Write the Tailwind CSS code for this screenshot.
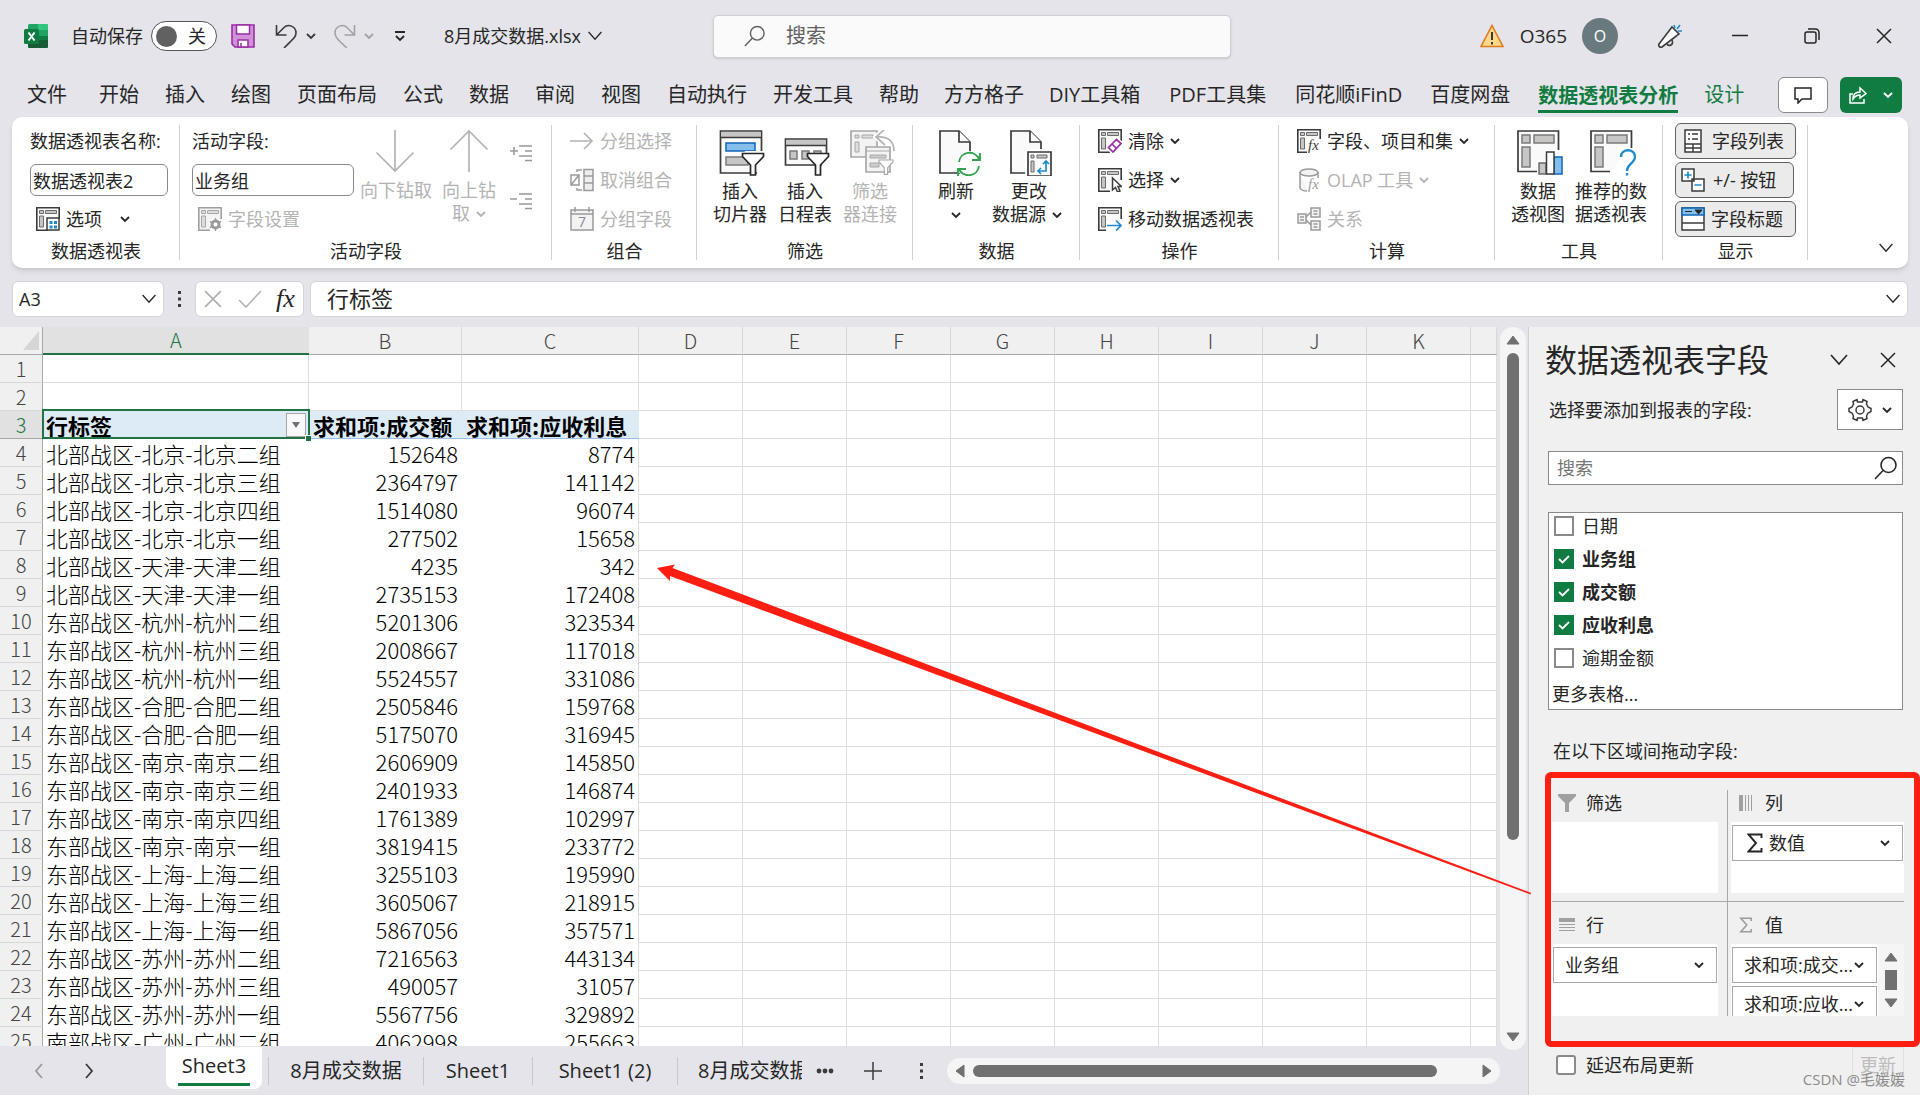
<!DOCTYPE html>
<html lang="zh-CN">
<head>
<meta charset="utf-8">
<title>8月成交数据.xlsx</title>
<script src="https://cdn.jsdelivr.net/npm/@tailwindcss/browser@4"></script>
</head>
<body class="relative flex h-screen flex-col overflow-hidden bg-[#e4e4ea] font-['Open_Sans','Noto_Sans_CJK_SC',sans-serif] text-[18px] leading-6 text-[#262626]">

<svg class="hidden" aria-hidden="true">
  <symbol id="chev" viewBox="0 0 10 8"><path d="M1 2l4 4 4-4" fill="none" stroke="currentColor" stroke-width="1.8"/></symbol>
  <symbol id="chev-lg" viewBox="0 0 20 14"><path d="M2 2l8 9 8-9" fill="none" stroke="currentColor" stroke-width="1.6"/></symbol>
  <symbol id="cross" viewBox="0 0 16 16"><path d="M1 1l14 14M15 1L1 15" fill="none" stroke="currentColor" stroke-width="1.5"/></symbol>
  <symbol id="glass" viewBox="0 0 24 24"><circle cx="14.500" cy="9" r="7.500" fill="none" stroke="currentColor" stroke-width="1.6"/><path d="M9 14.500L1 23" fill="none" stroke="currentColor" stroke-width="1.6"/></symbol>
  <symbol id="pivot" viewBox="0 0 24 24"><path d="M12 23.200H.8V.8h22.400V12" fill="#fafafa" stroke="#3b3b3b" stroke-width="1.6"/><path d="M3.500 3.500h4v3h-4zM9.500 3.500h11v3h-11zM3.500 9h4v11h-4z" fill="#c8c6c4" stroke="#6b6b6b"/></symbol>
  <symbol id="pivot-gray" viewBox="0 0 24 24"><path d="M12 23.200H.8V.8h22.400V12" fill="#f3f3f3" stroke="#a0a0a0" stroke-width="1.600"/><path d="M3.500 3.500h4v3h-4zM9.500 3.500h11v3h-11zM3.500 9h4v11h-4z" fill="#dcdcdc" stroke="#a8a8a8"/></symbol>
  <symbol id="pivot-lg" viewBox="0 0 46 46"><path d="M20 41.500H1V1h40.500V20" fill="#fafafa" stroke="#3b3b3b" stroke-width="1.7"/><path d="M5 5h8v8H5zM17 5h20v8H17zM5 17h8v20H5z" fill="#c8c6c4" stroke="#7a7a7a" stroke-width="1.5"/></symbol>
  <symbol id="funnel" viewBox="0 0 24 24"><path d="M1.500 1.500h21v3l-8 8.500v10h-5V13l-8-8.500z" fill="#fff" stroke="currentColor" stroke-width="1.700"/></symbol>
  <symbol id="sigma" viewBox="0 0 16 20"><path d="M14.500 5V1.500H1.500L9 10l-7.500 8.500h13V15" fill="none" stroke="currentColor" stroke-width="1.900"/></symbol>
  <symbol id="page" viewBox="0 0 34 46"><path d="M1 1h19l11 11v31H1z" fill="#fafafa" stroke="#3b3b3b" stroke-width="1.700"/><path d="M20 1v11h11" fill="#fff" stroke="#3b3b3b" stroke-width="1.700"/></symbol>
  <symbol id="tick" viewBox="0 0 20 20"><path d="M5 10l3.500 3.500L15 7" fill="none" stroke="#fff" stroke-width="1.800"/></symbol>
</svg>

<!-- Title bar -->
<header class="flex h-[72px] shrink-0 items-center">
  <div class="flex w-[713px] shrink-0 items-center pl-6">
    <svg class="size-6 shrink-0" viewBox="0 0 24 24"><rect x="4" width="20" height="24" rx="1.500" fill="#21a366"/><path d="M14 0h8.500A1.500 1.500 0 0 1 24 1.500V6H14z" fill="#33c481"/><path d="M4 6h10v6H4z" fill="#107c41"/><path d="M4 12h20v6H4z" fill="#107c41"/><path d="M4 16h20v6.500a1.500 1.500 0 0 1-1.500 1.500h-17A1.500 1.500 0 0 1 4 22.500z" fill="#185c37"/><rect y="5" width="15" height="15" rx="1.500" fill="#107c41"/><path d="M4.500 8.500l6 8M10.500 8.500l-6 8" stroke="#fff" stroke-width="2"/></svg>
    <span class="ml-[23px]">自动保存</span>
    <button class="ml-2 flex h-[30px] w-[66px] items-center justify-between rounded-full border border-[#555] bg-white pr-2.5 pl-1" role="switch" aria-checked="false" aria-label="自动保存"><span class="size-[21px] rounded-full bg-[#616161]"></span><span>关</span></button>
    <button class="ml-3.5" aria-label="保存"><svg class="size-6" viewBox="0 0 24 24"><path d="M1 1h22v22H4l-3-3z" fill="#d191d8" stroke="#9a2da6" stroke-width="1.600"/><path d="M5.500 1h13v9h-13zM7 16h10v7H7z" fill="#fff" stroke="#9a2da6" stroke-width="1.500"/><path d="M10 19v4" stroke="#9a2da6" stroke-width="1.500"/></svg></button>
    <button class="ml-5 flex items-center gap-[7px] text-[#3b3b3b]" aria-label="撤消"><svg class="size-6" viewBox="0 0 24 24"><path d="M1.500 1v10h10M1.500 11L9 3.500C13-.5 21 2 21 9c0 4-3 6-12 15" fill="none" stroke="currentColor" stroke-width="1.600"/></svg><svg class="h-2 w-2.5"><use href="#chev"/></svg></button>
    <button class="ml-4 flex items-center gap-2 text-[#a3a3a3]" aria-label="恢复"><svg class="size-6" viewBox="0 0 24 24"><path d="M22.500 1v10h-10M22.500 11L15 3.500C11-.5 3 2 3 9c0 4 3 7 12 15" fill="none" stroke="currentColor" stroke-width="1.600"/></svg><svg class="h-2 w-2.5"><use href="#chev"/></svg></button>
    <button class="ml-5" aria-label="自定义快速访问工具栏"><svg class="h-3 w-3" viewBox="0 0 12 12"><path d="M1 2h10M2 6l4 4 4-4" fill="none" stroke="#262626" stroke-width="1.800"/></svg></button>
    <button class="ml-[38px] flex items-center gap-1.5 whitespace-nowrap">8月成交数据.xlsx<svg class="h-3 w-4"><use href="#chev-lg"/></svg></button>
  </div>
  <label class="flex h-[43px] flex-1 items-center rounded-[5px] border border-[#d0d0d4] bg-[#fafafa] pl-[30px] text-[#616161] shadow-sm">
    <svg class="mr-5 size-6"><use href="#glass"/></svg>
    <input class="w-full bg-transparent text-[20px] outline-none placeholder:text-[#616161]" type="text" placeholder="搜索" aria-label="搜索">
  </label>
  <div class="flex w-[689px] shrink-0 items-center justify-end pr-7">
    <svg class="size-6" viewBox="0 0 24 24"><path d="M12 1.500L23 22.500H1z" fill="#fbd989" stroke="#e07a1f" stroke-width="1.600"/><path d="M12 8v8M12 18v2.500" stroke="#3b3b3b" stroke-width="2"/></svg>
    <span class="ml-4 text-[19px]">O365</span>
    <span class="ml-[15px] grid size-9 place-items-center rounded-full bg-[#69797e] text-[16px] text-white">O</span>
    <button class="ml-10" aria-label="即将推出"><svg class="size-6" viewBox="0 0 24 24"><path d="M1 20L14 3l7 7L4 23c-2 1-4-1-3-3z" fill="#fafafa" stroke="#3b3b3b" stroke-width="1.600"/><path d="M9 20c2 3 7 1 5-4" fill="none" stroke="#3b3b3b" stroke-width="1.600"/><path d="M16 1l1 3M22 1l-3 4M20 7h4" stroke="#1e8bcd" stroke-width="1.600"/></svg></button>
    <button class="ml-[50px]" aria-label="最小化"><svg class="h-4 w-4" viewBox="0 0 16 16"><path d="M0 7.500h16" stroke="#262626" stroke-width="1.500"/></svg></button>
    <button class="ml-[56px]" aria-label="还原"><svg class="h-4 w-4" viewBox="0 0 16 16" fill="none" stroke="#262626" stroke-width="1.500"><rect x="1" y="4" width="11" height="11" rx="2"/><path d="M4 1h7.500A3.500 3.500 0 0 1 15 4.500V12"/></svg></button>
    <button class="ml-[56px]" aria-label="关闭"><svg class="h-4 w-4"><use href="#cross"/></svg></button>
  </div>
</header>

<!-- Ribbon tabs -->
<nav class="flex h-[45px] shrink-0 items-center whitespace-nowrap pr-[18px] pl-3.5 text-[20px]">
  <a class="mr-1.5 px-[13px]" href="#">文件</a>
  <a class="px-[13px]" href="#">开始</a>
  <a class="px-[13px]" href="#">插入</a>
  <a class="px-[13px]" href="#">绘图</a>
  <a class="px-[13px]" href="#">页面布局</a>
  <a class="px-[13px]" href="#">公式</a>
  <a class="px-[13px]" href="#">数据</a>
  <a class="px-[13px]" href="#">审阅</a>
  <a class="px-[13px]" href="#">视图</a>
  <a class="px-[13px]" href="#">自动执行</a>
  <a class="px-[13px]" href="#">开发工具</a>
  <a class="px-[13px]" href="#">帮助</a>
  <a class="px-3" href="#">方方格子</a>
  <a class="px-[13px]" href="#">DIY工具箱</a>
  <a class="px-4" href="#">PDF工具集</a>
  <a class="px-[13px]" href="#">同花顺iFinD</a>
  <a class="px-[15px]" href="#">百度网盘</a>
  <a class="mx-[13px] mt-2 border-b-[3px] border-[#107c41] pb-0.5 font-bold text-[#107c41]" href="#">数据透视表分析</a>
  <a class="px-[13px] text-[#107c41]" href="#">设计</a>
  <button class="ml-auto grid h-9 w-[50px] place-items-center rounded-md border border-[#8a8a8a] bg-white" aria-label="批注"><svg class="size-[18px]" viewBox="0 0 18 18"><path d="M1 2h16v11H8l-4 4v-4H1z" fill="none" stroke="#262626" stroke-width="1.500"/></svg></button>
  <button class="ml-3 flex h-9 w-[62px] items-center justify-center gap-4 rounded-md bg-[#107c41] text-white" aria-label="共享"><svg class="size-[18px]" viewBox="0 0 18 18" fill="none" stroke="currentColor" stroke-width="1.500"><path d="M4 8H1v9h14v-4"/><path d="M4 13c0-5 3-7 7-7V2l6 5.500L11 12V9c-3 0-5 1-7 4z"/></svg><svg class="h-2 w-2.5"><use href="#chev"/></svg></button>
</nav>

<!-- Ribbon -->
<section class="mx-3 flex h-[151px] shrink-0 rounded-[10px] bg-white pt-1 whitespace-nowrap shadow-md">
  <div class="flex w-[168px] flex-col">
    <div class="h-[117px] pl-[18px]">
      <label class="flex h-[39px] items-center" for="pt-name">数据透视表名称:</label>
      <div class="flex h-[39px] items-center"><input class="h-8 w-[138px] rounded-md border border-[#8a8a8a] bg-white px-0.5" id="pt-name" value="数据透视表2"></div>
      <button class="flex h-[39px] items-center gap-1.5 pl-1.5"><svg class="size-6" viewBox="0 0 24 24"><use href="#pivot"/><path d="M11 11h12v12H11z" fill="#fff" stroke="#3b3b3b" stroke-width="1.500"/><path d="M13.500 14h3v3h-3zM18 14h3v3h-3zM13.500 18.500h3v3h-3zM18 18.500h3v3h-3z" fill="#1e8bcd"/></svg>选项<svg class="ml-3 h-2 w-2.5"><use href="#chev"/></svg></button>
    </div>
    <div class="text-center leading-[26px]">数据透视表</div>
  </div>
  <div class="mt-1 mb-2 -ml-px w-px bg-[#d1d1d1]"></div>

  <div class="flex w-[372px] flex-col">
    <div class="flex h-[117px] pl-3">
      <div class="w-[162px]">
        <label class="flex h-[39px] items-center" for="act-field">活动字段:</label>
        <div class="flex h-[39px] items-center"><input class="h-8 w-full rounded-md border border-[#8a8a8a] bg-white px-0.5" id="act-field" value="业务组"></div>
        <button class="flex h-[39px] items-center gap-1.5 pl-1.5 text-[#b4b4b4]" disabled><svg class="size-6" viewBox="0 0 24 24"><use href="#pivot-gray"/><circle cx="17.500" cy="17.500" r="6.500" fill="#fff"/><circle cx="17.500" cy="17.500" r="3.500" fill="none" stroke="#9a9a9a" stroke-width="3"/><path d="M17.500 11v13M12 14.500l11 6M23 14.500l-11 6" stroke="#9a9a9a" stroke-width="1.500"/><circle cx="17.500" cy="17.500" r="2" fill="#fff"/></svg>字段设置</button>
      </div>
      <button class="ml-1.5 flex w-[72px] flex-col items-center pt-2 leading-[23px] text-[#b4b4b4]" disabled><svg class="mb-1 h-[46px] w-[46px]" viewBox="0 0 46 46"><path d="M22 1v41M3.500 23.500L22 42l18.500-18.500" fill="none" stroke="currentColor" stroke-width="1.700"/></svg>向下钻取</button>
      <button class="ml-2.5 flex w-[54px] flex-col items-center pt-2 leading-[23px] text-[#b4b4b4]" disabled><svg class="mb-1 h-[46px] w-[46px]" viewBox="0 0 46 46"><path d="M23 43V2M4.500 20.500L23 2l18.500 18.500" fill="none" stroke="currentColor" stroke-width="1.700"/></svg>向上钻<span class="flex items-center gap-1.5">取<svg class="h-2 w-2.5"><use href="#chev"/></svg></span></button>
      <div class="ml-3.5 flex flex-col gap-[30px] pt-[23px] text-[#9a9a9a]">
        <button disabled aria-label="展开字段"><svg class="h-[18px] w-[22px]" viewBox="0 0 22 18"><path d="M0 7h8M4 3v8M9 2h13M15 7h7M9 12h13M15 16.500h7" stroke="currentColor" stroke-width="1.600"/></svg></button>
        <button disabled aria-label="折叠字段"><svg class="h-[18px] w-[22px]" viewBox="0 0 22 18"><path d="M0 7h7M9 2h13M15 7h7M9 12h13M15 16.500h7" stroke="currentColor" stroke-width="1.600"/></svg></button>
      </div>
    </div>
    <div class="text-center leading-[26px]">活动字段</div>
  </div>
  <div class="mt-1 mb-2 -ml-px w-px bg-[#d1d1d1]"></div>

  <div class="flex w-[145px] flex-col">
    <div class="h-[117px] pl-[18px] text-[#b4b4b4]">
      <button class="flex h-[39px] items-center gap-1.5" disabled><svg class="size-6" viewBox="0 0 24 24"><path d="M0 12h22M14 4l8 8-8 8" fill="none" stroke="currentColor" stroke-width="1.700"/></svg>分组选择</button>
      <button class="flex h-[39px] items-center gap-1.5" disabled><svg class="size-6" viewBox="0 0 24 24" fill="none" stroke="#9a9a9a" stroke-width="1.500"><path d="M1 7h8v10H1zM1 17L9 7M7 4V2h5M7 20v2h5"/><path d="M14 1.500h9v21h-9zM14 8h9M14 15h9" fill="#eee"/></svg>取消组合</button>
      <button class="flex h-[39px] items-center gap-1.5" disabled><svg class="size-6" viewBox="0 0 24 24"><path d="M1 3h22v20H1zM1 7h22M5 0v5M19 0v5" fill="#f3f3f3" stroke="#9a9a9a" stroke-width="1.500"/><text x="12" y="20" text-anchor="middle" font-size="14" fill="#8a8a8a">7</text></svg>分组字段</button>
    </div>
    <div class="text-center leading-[26px]">组合</div>
  </div>
  <div class="mt-1 mb-2 -ml-px w-px bg-[#d1d1d1]"></div>

  <div class="flex w-[216px] flex-col">
    <div class="flex h-[117px] gap-[11px] pl-4 leading-[23px]">
      <button class="flex w-[54px] flex-col items-center pt-[9px]"><svg class="mb-1 ml-1 size-[46px] shrink-0" viewBox="0 0 46 46"><path d="M1.500 1h41v42h-41z" fill="#fafafa" stroke="#3b3b3b" stroke-width="1.700"/><path d="M2 2h40v5H2z" fill="#c8c6c4"/><path d="M1.500 7.500h41" stroke="#3b3b3b" stroke-width="1.500"/><path d="M7 13h29v8H7z" fill="#83beec" stroke="#1066b5" stroke-width="1.500"/><path d="M7 27h22v8H7z" fill="#c8c6c4" stroke="#7a7a7a" stroke-width="1.500"/><path d="M26 21h20v25h-8V34l-14-9z" fill="#fff"/><use href="#funnel" x="22" y="22" width="24" height="24"/></svg>插入<span>切片器</span></button>
      <button class="flex w-[54px] flex-col items-center pt-[9px]"><svg class="mb-1 ml-1 size-[46px] shrink-0" viewBox="0 0 46 46"><path d="M1.500 9h41v26h-41z" fill="#fafafa" stroke="#3b3b3b" stroke-width="1.700"/><path d="M2 10h40v5H2z" fill="#c8c6c4"/><path d="M1.500 15.500h41" stroke="#3b3b3b" stroke-width="1.500"/><path d="M6 21h7v8H6zM18 21h7v8h-7zM30 21h7v8h-7z" fill="#c8c6c4" stroke="#7a7a7a" stroke-width="1.500"/><path d="M40 24h6v13h-8v-4z" fill="#fff"/><use href="#funnel" x="22" y="22" width="24" height="24"/></svg>插入<span>日程表</span></button>
      <button class="flex w-[54px] flex-col items-center pt-[9px] text-[#b4b4b4]" disabled><svg class="mb-1 ml-1 size-[46px] shrink-0" viewBox="0 0 46 46"><path d="M2 1h26v26H2z" fill="#f3f3f3" stroke="#a8a8a8" stroke-width="1.700"/><path d="M6 5h4v3H6zM13 5h11v3H13zM6 12h4v10H6z" fill="#ddd" stroke="#a8a8a8"/><path d="M36-1l-9 8 9 8M27 7c12-1 18 4 18 14" fill="none" stroke="#fff" stroke-width="5"/><path d="M36-1l-9 8 9 8M27 7c12-1 18 4 18 14" fill="none" stroke="#b4b4b4" stroke-width="1.700"/><path d="M17 17h24v25H17z" fill="#f3f3f3" stroke="#a8a8a8" stroke-width="1.700"/><path d="M17 21h24M21 25h16v3H21zM21 33h9v4h-9z" fill="#ccc" stroke="#a8a8a8"/><g color="#a8a8a8"><use href="#funnel" x="29" y="29" width="16" height="16"/></g></svg>筛选<span>器连接</span></button>
    </div>
    <div class="text-center leading-[26px]">筛选</div>
  </div>
  <div class="mt-1 mb-2 -ml-px w-px bg-[#d1d1d1]"></div>

  <div class="flex w-[167px] flex-col">
    <div class="flex h-[117px] gap-2 pl-4 leading-[23px]">
      <button class="flex w-[54px] flex-col items-center pt-[9px]"><svg class="mb-1 ml-2 h-[46px] w-[42px] shrink-0" viewBox="0 0 42 46"><use href="#page" width="34" height="46"/><circle cx="30" cy="34" r="13" fill="#fff"/><path d="M20 32a10.500 10.500 0 0 1 20-3M40 36a10.500 10.500 0 0 1-20 3M41 23v7h-8M19 46v-7h8" fill="none" stroke="#2fa34f" stroke-width="1.900"/></svg>刷新<svg class="mt-2 h-2 w-2.5"><use href="#chev"/></svg></button>
      <button class="flex w-[72px] flex-col items-center pt-[9px]"><svg class="mb-1 ml-2 h-[46px] w-[42px] shrink-0" viewBox="0 0 42 46"><use href="#page" width="34" height="46"/><path d="M15 19h27v27H15z" fill="#fff"/><path d="M18 22h23v24H18z" fill="#fafafa" stroke="#3b3b3b" stroke-width="1.700"/><path d="M21 25h3v3h-3zM27 25h10v3H27zM21 31h3v11h-3z" fill="#c8c6c4" stroke="#6b6b6b"/><path d="M36 31v10h-8M33 34l3-3 3 3M31 38l-3 3 3 3" fill="none" stroke="#1e8bcd" stroke-width="1.700"/></svg><span class="ml-1">更改</span><span class="flex items-center gap-1.5">数据源<svg class="h-2 w-2.5"><use href="#chev"/></svg></span></button>
    </div>
    <div class="text-center leading-[26px]">数据</div>
  </div>
  <div class="mt-1 mb-2 -ml-px w-px bg-[#d1d1d1]"></div>

  <div class="flex w-[199px] flex-col">
    <div class="h-[117px] pl-[18px]">
      <button class="flex h-[39px] items-center gap-1.5"><svg class="size-6" viewBox="0 0 24 24"><use href="#pivot"/><path d="M10 18L19 9l6 4-9 11h-4z" fill="#fff"/><path d="M10.500 18.500l8-8 4.500 4-8 8.500z M14 15l4.500 4.500" fill="#fff" stroke="#9a2da6" stroke-width="1.700"/></svg>清除<svg class="h-2 w-2.5"><use href="#chev"/></svg></button>
      <button class="flex h-[39px] items-center gap-1.5"><svg class="size-6" viewBox="0 0 24 24"><use href="#pivot"/><path d="M14.500 10v12l3-2.500 2 4.500 2.500-1-2-4.500h3.500z" fill="#fff" stroke="#3b3b3b" stroke-width="1.500"/></svg>选择<svg class="h-2 w-2.5"><use href="#chev"/></svg></button>
      <button class="flex h-[39px] items-center gap-1.5"><svg class="size-6" viewBox="0 0 24 24"><use href="#pivot"/><path d="M8 14h16v10H8z" fill="#fff"/><path d="M9 18.500h14M18 13.500l5 5-5 5" fill="none" stroke="#1e8bcd" stroke-width="1.700"/></svg>移动数据透视表</button>
    </div>
    <div class="text-center leading-[26px]">操作</div>
  </div>
  <div class="mt-1 mb-2 -ml-px w-px bg-[#d1d1d1]"></div>

  <div class="flex w-[216px] flex-col">
    <div class="h-[117px] pl-[18px]">
      <button class="flex h-[39px] items-center gap-1.5"><svg class="size-6" viewBox="0 0 24 24"><use href="#pivot"/><path d="M10 10h14v14H10z" fill="#fff"/><text x="11" y="21" font-size="15" font-style="italic" font-family="Liberation Serif" fill="#3b3b3b">fx</text></svg>字段、项目和集<svg class="h-2 w-2.5"><use href="#chev"/></svg></button>
      <button class="flex h-[39px] items-center gap-1.5 text-[#b4b4b4]" disabled><svg class="size-6" viewBox="0 0 24 24"><path d="M3 4v16c1 2 4 3 7 3M21 4v6" fill="#f3f3f3" stroke="#9a9a9a" stroke-width="1.500"/><ellipse cx="12" cy="4.500" rx="9" ry="3.500" fill="#f3f3f3" stroke="#9a9a9a" stroke-width="1.500"/><text x="11" y="21" font-size="15" font-style="italic" font-family="Liberation Serif" fill="#9a9a9a">fx</text></svg>OLAP 工具<svg class="h-2 w-2.5"><use href="#chev"/></svg></button>
      <button class="flex h-[39px] items-center gap-1.5 text-[#b4b4b4]" disabled><svg class="size-6" viewBox="0 0 24 24" fill="#f3f3f3" stroke="#9a9a9a" stroke-width="1.500"><path d="M9 10l5-5M9 13l5 5"/><path d="M1 7h8v9H1zM14 1h9v9h-9zM14 14h9v9h-9zM3 10h4M3 13h4M16.500 4h4M16.500 7h4M16.500 17h4M16.500 20h4"/></svg>关系</button>
    </div>
    <div class="text-center leading-[26px]">计算</div>
  </div>
  <div class="mt-1 mb-2 -ml-px w-px bg-[#d1d1d1]"></div>

  <div class="flex w-[168px] flex-col">
    <div class="flex h-[117px] gap-2.5 pl-4 leading-[23px]">
      <button class="flex w-[54px] flex-col items-center pt-[9px]"><svg class="mb-1 ml-1 size-[46px] shrink-0" viewBox="0 0 46 46"><use href="#pivot-lg"/><path d="M20 30h8V20h16v26H20z" fill="#fff"/><path d="M22 33h7v11h-7z" fill="#c8c6c4" stroke="#6b6b6b" stroke-width="1.500"/><path d="M37 27h8v17h-8z" fill="#83beec" stroke="#1066b5" stroke-width="1.500"/><path d="M29.500 22h7.500v22h-7.500z" fill="#fff" stroke="#3b3b3b" stroke-width="1.500"/></svg>数据<span>透视图</span></button>
      <button class="flex w-[72px] flex-col items-center pt-[9px]"><svg class="mb-1 ml-1 size-[46px] shrink-0" viewBox="0 0 46 46"><use href="#pivot-lg"/><path d="M28 18h18v28H28z" fill="#fff"/><path d="M31 27c0-9 14-9 14 0 0 6-8 7-8 14M37 43v2.500" fill="none" stroke="#1e8bcd" stroke-width="2.400"/></svg>推荐的数<span>据透视表</span></button>
    </div>
    <div class="text-center leading-[26px]">工具</div>
  </div>
  <div class="mt-1 mb-2 -ml-px w-px bg-[#d1d1d1]"></div>

  <div class="flex w-[145px] flex-col">
    <div class="flex h-[117px] flex-col items-start gap-[3px] pt-0.5 pl-3">
      <button class="flex h-9 w-[121px] items-center gap-2.5 rounded-md border border-[#616161] bg-[#ebebeb] pl-2" aria-pressed="true"><svg class="h-6 w-[18px]" viewBox="0 0 18 24"><path d="M1 1h16v22H1zM1 15h16M1 19h16M9 15v8" fill="#fff" stroke="#3b3b3b" stroke-width="1.500"/><path d="M4 5h2M8 5h6M4 10h2M8 10h6" stroke="#3b3b3b" stroke-width="1.500"/></svg>字段列表</button>
      <button class="flex h-9 w-[119px] items-center gap-2 rounded-md border border-[#616161] bg-[#ebebeb] pl-[5px]" aria-pressed="true"><svg class="size-6" viewBox="0 0 24 24" fill="#fff" stroke-width="1.500"><path d="M1 1h12v12H1zM11 11h12v12H11z" stroke="#3b3b3b"/><path d="M3.500 7h7M7 3.500v7M13.500 17h7" stroke="#1e8bcd" stroke-width="1.700"/></svg>+/- 按钮</button>
      <button class="flex h-9 w-[121px] items-center gap-1.5 rounded-md border border-[#616161] bg-[#ebebeb] pl-[5px]" aria-pressed="true"><svg class="size-6" viewBox="0 0 24 24"><path d="M1 1h22v22H1zM1 16h22" fill="#fff" stroke="#3b3b3b" stroke-width="1.500"/><path d="M1 1h22v7H1z" fill="#83beec" stroke="#1066b5" stroke-width="1.500"/><path d="M4 4.500h7M14 3h7l-3.500 4z" fill="#262626" stroke="#262626"/></svg>字段标题</button>
    </div>
    <div class="text-center leading-[26px]">显示</div>
  </div>
  <div class="mt-1 mb-2 -ml-px w-px bg-[#d1d1d1]"></div>
  <button class="mr-3.5 mb-3.5 ml-auto self-end" aria-label="折叠功能区"><svg class="h-3 w-4"><use href="#chev-lg"/></svg></button>
</section>

<!-- Formula bar -->
<section class="mx-3 mt-[13px] mb-2.5 flex h-9 shrink-0 items-center">
  <div class="flex h-full w-[152px] items-center justify-between rounded-md border border-[#d4d4d8] bg-white pr-1.5 pl-1.5">
    <input class="w-24 bg-transparent" value="A3" aria-label="名称框">
    <button aria-label="名称列表"><svg class="h-3 w-4"><use href="#chev-lg"/></svg></button>
  </div>
  <svg class="mx-[14px] h-4 w-[3px]" viewBox="0 0 3 16"><path d="M0 0h3v3H0zM0 6.500h3v3H0zM0 13h3v3H0z" fill="#3b3b3b"/></svg>
  <div class="flex h-full w-[109px] items-center rounded-md border border-[#d4d4d8] bg-white pl-2">
    <button class="text-[#b0b0b0]" aria-label="取消"><svg class="size-[18px]"><use href="#cross"/></svg></button>
    <button class="ml-4 text-[#b0b0b0]" aria-label="输入"><svg class="h-[18px] w-6" viewBox="0 0 24 18"><path d="M1 10l7 7L23 1" fill="none" stroke="currentColor" stroke-width="1.500"/></svg></button>
    <button class="ml-3.5 font-['Liberation_Serif',serif] text-[26px] text-[#262626] italic" aria-label="插入函数">fx</button>
  </div>
  <div class="ml-1.5 flex h-full flex-1 items-center rounded-md border border-[#d4d4d8] bg-white pr-1.5 pl-4">
    <input class="flex-1 bg-transparent pb-0.5 text-[22px] leading-7" value="行标签" aria-label="编辑栏">
    <button aria-label="展开编辑栏"><svg class="h-3 w-4"><use href="#chev-lg"/></svg></button>
  </div>
</section>

<main class="flex min-h-0 flex-1">
  <div class="flex min-w-0 flex-1 flex-col">
    <div class="flex min-h-0 flex-1">
      <!-- Worksheet -->
      <div class="mb-px min-w-0 flex-1 overflow-hidden bg-white">
        <table class="w-full table-fixed border-separate border-spacing-0 font-['Noto_Sans_CJK_SC',sans-serif] text-[22px] leading-[26px] font-light whitespace-nowrap text-black">
          <colgroup><col class="w-[43px]"><col class="w-[266px]"><col class="w-[153px]"><col class="w-[177px]"><col class="w-[104px]"><col class="w-[104px]"><col class="w-[104px]"><col class="w-[104px]"><col class="w-[104px]"><col class="w-[104px]"><col class="w-[104px]"><col class="w-[104px]"><col></colgroup>
          <thead><tr class="h-7 bg-[#f0f0f0] text-[20px] text-[#444]" id="cols"></tr></thead>
          <tbody id="rows"></tbody>
        </table>
      </div>
      <!-- Vertical scrollbar -->
      <div class="mr-0.5 mb-[-3px] ml-[3px] flex w-[26px] flex-col items-center rounded-full bg-[#f5f5f5] py-2">
        <svg class="h-2.5 w-3.5" viewBox="0 0 14 10"><path d="M7 1l6 8H1z" fill="#707070" stroke="#707070" stroke-linejoin="round"/></svg>
        <div class="mt-2 h-[487px] w-3 rounded-full bg-[#707070]"></div>
        <svg class="mt-auto h-2.5 w-3.5" viewBox="0 0 14 10"><path d="M7 9l6-8H1z" fill="#707070" stroke="#707070" stroke-linejoin="round"/></svg>
      </div>
    </div>

    <!-- Sheet tabs -->
    <footer class="flex h-12 shrink-0 items-center pr-7 whitespace-nowrap text-[20px]">
      <button class="ml-[34px] text-[#9a9a9a]" aria-label="上一个"><svg class="h-4 w-2.5" viewBox="0 0 10 16"><path d="M8 1L2 8l6 7" fill="none" stroke="currentColor" stroke-width="1.800"/></svg></button>
      <button class="ml-10 text-[#3b3b3b]" aria-label="下一个"><svg class="h-4 w-2.5" viewBox="0 0 10 16"><path d="M2 1l6 7-6 7" fill="none" stroke="currentColor" stroke-width="1.800"/></svg></button>
      <a class="ml-[72px] h-[42px] w-24 self-start rounded-b-lg bg-white px-3 pt-1.5" href="#"><span class="block border-b-[3px] border-[#107c41] pb-1 text-center leading-[26px]">Sheet3</span></a>
      <a class="ml-1.5 w-[155px] border-l border-[#c8c8cc] text-center leading-7" href="#">8月成交数据</a>
      <a class="w-[109px] border-l border-[#c8c8cc] text-center leading-7" href="#">Sheet1</a>
      <a class="w-[145px] border-l border-[#c8c8cc] text-center leading-7" href="#">Sheet1 (2)</a>
      <a class="w-[125px] overflow-hidden border-l border-[#c8c8cc] pl-5 leading-7" href="#">8月成交数据</a>
      <button class="ml-3.5" aria-label="更多工作表"><svg class="h-1.5 w-[18px]" viewBox="0 0 18 6" fill="#3b3b3b"><circle cx="3" cy="3" r="2.400"/><circle cx="9" cy="3" r="2.400"/><circle cx="15" cy="3" r="2.400"/></svg></button>
      <button class="ml-[30px]" aria-label="新工作表"><svg class="size-[18px]" viewBox="0 0 18 18"><path d="M9 0v18M0 9h18" stroke="#3b3b3b" stroke-width="1.500"/></svg></button>
      <svg class="ml-[38px] h-4 w-[3px] shrink-0" viewBox="0 0 3 16"><path d="M0 0h3v3H0zM0 6.500h3v3H0zM0 13h3v3H0z" fill="#3b3b3b"/></svg>
      <div class="ml-6 flex h-[26px] flex-1 items-center rounded-full bg-[#f5f5f5] px-2">
        <svg class="h-3.5 w-2.5" viewBox="0 0 10 14"><path d="M1 7l8-6v12z" fill="#707070" stroke="#707070" stroke-linejoin="round"/></svg>
        <div class="mr-[45px] ml-2 h-3 flex-1 rounded-full bg-[#707070]"></div>
        <svg class="h-3.5 w-2.5" viewBox="0 0 10 14"><path d="M9 7L1 1v12z" fill="#707070" stroke="#707070" stroke-linejoin="round"/></svg>
      </div>
    </footer>
  </div>

  <!-- Field list pane -->
  <aside class="flex w-[392px] shrink-0 flex-col border-l border-[#d0d0d4] bg-[#f0f0f0]">
    <div class="flex h-[62px] shrink-0 items-center pt-1 pr-6 pl-4">
      <h2 class="text-[32px] leading-10">数据透视表字段</h2>
      <button class="ml-auto" aria-label="任务窗格选项"><svg class="h-3.5 w-5"><use href="#chev-lg"/></svg></button>
      <button class="ml-[31px]" aria-label="关闭窗格"><svg class="size-4"><use href="#cross"/></svg></button>
    </div>
    <div class="flex h-[41px] shrink-0 items-center justify-between pr-[17px] pl-5">
      <span>选择要添加到报表的字段:</span>
      <button class="flex h-[41px] w-[66px] items-center justify-center gap-2.5 border border-[#8a8a8a] bg-white" aria-label="工具"><svg class="size-6" viewBox="0 0 24 24" fill="none" stroke="#3b3b3b" stroke-width="1.500"><path d="M9.500 4L9 1.500l-4 2L5.500 6 4 9l-3 1.500v3L4 15l1.500 3L5 20.500l4 2 .5-2.500h5l.5 2.500 4-2-.5-2.500 1.500-3 3-1.500v-3L20 9l-1.500-3 .5-2.500-4-2-.5 2.500z"/><circle cx="12" cy="12" r="4"/></svg><svg class="h-2 w-2.5"><use href="#chev"/></svg></button>
    </div>
    <label class="mt-[21px] mr-[17px] ml-[19px] flex h-[34px] shrink-0 items-center border border-[#8a8a8a] bg-white pr-1 pl-2">
      <input class="min-w-0 flex-1 bg-transparent placeholder:text-[#767676]" type="text" placeholder="搜索" aria-label="搜索字段">
      <svg class="size-6"><use href="#glass"/></svg>
    </label>
    <div class="mt-[27px] mr-[17px] ml-[19px] h-[198px] shrink-0 border border-[#8a8a8a] bg-white">
      <ul class="-mt-1 pl-[5px]" id="fields"></ul>
      <a class="ml-[3px] block pt-2" href="#">更多表格...</a>
    </div>
    <p class="mt-[29px] pl-6">在以下区域间拖动字段:</p>

    <div class="ml-4 mt-[9px] h-[275px] shrink-0 rounded-md border-[6px] border-[#ff1e12] pt-3 pr-2.5 pl-px">
      <div class="grid h-[226px] grid-cols-[176px_1fr] grid-rows-[112px_114px]">
        <div class="border-r border-b border-[#a8a8a8] pr-[9px]">
          <div class="flex h-8 items-center gap-2.5 pb-1.5 pl-1.5"><svg class="h-[18px] w-[18px]" viewBox="0 0 18 18"><path d="M0 0h18v2l-7 7v9H7V9L0 2z" fill="#a0a0a0"/></svg>筛选</div>
          <div class="h-[71px] bg-white"></div>
        </div>
        <div class="border-b border-[#a8a8a8] pl-[3px]">
          <div class="flex h-8 items-center gap-3 pb-1.5 pl-2"><svg class="h-4 w-3.5" viewBox="0 0 14 16"><path d="M0 0h4v16H0zM6 0h1v16H6zM9 0h1v16H9zM12 0h1v16h-1z" fill="#a0a0a0"/></svg>列</div>
          <div class="h-[71px] bg-white p-px pt-[3px]"><button class="flex h-9 w-full items-center border border-[#a8a8a8] pr-3 pl-3.5"><svg class="mr-1.5 h-5 w-4"><use href="#sigma"/></svg>数值<svg class="ml-auto h-2 w-2.5"><use href="#chev"/></svg></button></div>
        </div>
        <div class="border-r border-[#a8a8a8] pt-2 pr-[9px]">
          <div class="flex h-[34px] items-center gap-[11px] pb-1 pl-[7px]"><svg class="h-3.5 w-4" viewBox="0 0 16 14"><path d="M0 0h16v4H0zM0 6h16v1H0zM0 9h16v1H0zM0 12h16v1H0z" fill="#a0a0a0"/></svg>行</div>
          <div class="h-[72px] bg-white p-px pt-[3px]"><button class="flex h-9 w-full items-center border border-[#a8a8a8] pr-3 pl-[11px]">业务组<svg class="ml-auto h-2 w-2.5"><use href="#chev"/></svg></button></div>
        </div>
        <div class="pt-2 pl-[3px]">
          <div class="flex h-[34px] items-center gap-3 pb-1 pl-2"><svg class="h-4 w-3.5 text-[#9a9a9a]"><use href="#sigma"/></svg>值</div>
          <div class="flex h-[72px] overflow-hidden bg-white">
            <div class="flex flex-1 flex-col gap-[3px] p-px pt-[3px]">
              <button class="flex h-9 shrink-0 items-center justify-between border border-[#a8a8a8] pr-3 pl-[11px] whitespace-nowrap">求和项:成交...<svg class="h-2 w-2.5"><use href="#chev"/></svg></button>
              <button class="flex h-9 shrink-0 items-center justify-between border border-[#a8a8a8] pr-3 pl-[11px] whitespace-nowrap">求和项:应收...<svg class="h-2 w-2.5"><use href="#chev"/></svg></button>
            </div>
            <div class="flex w-[26px] flex-col items-center justify-between bg-[#f5f5f5] py-2">
              <svg class="h-2.5 w-3.5" viewBox="0 0 14 10"><path d="M7 1l6 8H1z" fill="#707070" stroke="#707070" stroke-linejoin="round"/></svg>
              <div class="h-5 w-3 bg-[#707070]"></div>
              <svg class="h-2.5 w-3.5" viewBox="0 0 14 10"><path d="M7 9l6-8H1z" fill="#707070" stroke="#707070" stroke-linejoin="round"/></svg>
            </div>
          </div>
        </div>
      </div>
    </div>
    <div class="relative flex flex-1 items-start justify-between pr-4 pl-[27px]">
      <label class="flex items-center gap-2.5 pt-1.5"><input class="size-5 appearance-none rounded-[3px] border-2 border-[#8a8a8a] bg-white" type="checkbox">延迟布局更新</label>
      <button class="h-9 w-[52px] border border-[#e0e0e0] text-[#bdbdbd]" disabled>更新</button>
      <span class="absolute right-[15px] bottom-1.5 text-[15px] leading-5 text-[#8c8c8c]">CSDN @毛媛媛</span>
    </div>
  </aside>
</main>

<!-- Annotation arrow from the field areas to the pivot table -->
<svg class="pointer-events-none absolute top-[564px] left-[657px] h-[332px] w-[876px]" viewBox="0 0 876 332"><path d="M0 4L18 .5l-2.500 3.500L874 328.800l-.5 1.600L13 12v5z" fill="#ff1e12"/></svg>

<script>
const columns = ['A','B','C','D','E','F','G','H','I','J','K',''];
const data = [
  ['北部战区-北京-北京二组',152648,8774],['北部战区-北京-北京三组',2364797,141142],['北部战区-北京-北京四组',1514080,96074],
  ['北部战区-北京-北京一组',277502,15658],['北部战区-天津-天津二组',4235,342],['北部战区-天津-天津一组',2735153,172408],
  ['东部战区-杭州-杭州二组',5201306,323534],['东部战区-杭州-杭州三组',2008667,117018],['东部战区-杭州-杭州一组',5524557,331086],
  ['东部战区-合肥-合肥二组',2505846,159768],['东部战区-合肥-合肥一组',5175070,316945],['东部战区-南京-南京二组',2606909,145850],
  ['东部战区-南京-南京三组',2401933,146874],['东部战区-南京-南京四组',1761389,102997],['东部战区-南京-南京一组',3819415,233772],
  ['东部战区-上海-上海二组',3255103,195990],['东部战区-上海-上海三组',3605067,218915],['东部战区-上海-上海一组',5867056,357571],
  ['东部战区-苏州-苏州二组',7216563,443134],['东部战区-苏州-苏州三组',490057,31057],['东部战区-苏州-苏州一组',5567756,329892],
  ['南部战区-广州-广州二组',4062998,255663]
];
document.getElementById('cols').innerHTML =
  '<th class="border-r border-b border-[#a8a8a8] p-0"><svg class="ml-auto mr-0.5 size-5" viewBox="0 0 20 20"><path d="M19 0v19H3z" fill="#d6d6d6"/></svg></th>' +
  columns.map((c, i) => i === 0
    ? '<th class="border-b-2 border-[#217346] bg-[#e1e1e1] p-0 font-light text-[#217346]">A</th>'
    : `<th class="border-r border-b border-r-[#d8d8d8] border-b-[#a8a8a8] p-0 font-light">${c}</th>`).join('');

const grid = '<td class="border-r border-b border-[#dedede] p-0"></td>';
const rowHead = n => n === 3
  ? '<th class="border-r border-b border-[#a8a8a8] bg-[#e1e1e1] p-0 text-[20px] font-light text-[#217346]">3</th>'
  : `<th class="border-r border-b border-r-[#a8a8a8] border-b-[#d8d8d8] bg-[#f0f0f0] p-0 text-[20px] font-light text-[#444]">${n}</th>`;
let html = '';
for (let n = 1; n <= 25; n++) {
  let cells;
  if (n < 3) cells = grid.repeat(3);
  else if (n === 3) cells =
    '<td class="relative bg-[#ddebf7] p-0 pl-[3px] font-bold">行标签<button class="absolute top-0.5 right-[3px] z-10 grid h-6 w-5 place-items-center border border-[#a8a8a8] bg-[#f8f8fa]" aria-label="筛选"><svg class="h-1.5 w-2.5" viewBox="0 0 10 6"><path d="M1 0h8L5 6z" fill="#707070"/></svg></button><span class="absolute -inset-x-px -top-0.5 bottom-0 border-2 border-[#217346]"></span><span class="absolute -right-0.5 -bottom-0.5 z-10 size-1.5 border-t border-l border-white bg-[#217346]"></span></td>' +
    '<td class="border-b border-[#9bc2e6] bg-[#ddebf7] p-0 pl-1 font-bold">求和项:成交额</td><td class="border-b border-[#9bc2e6] bg-[#ddebf7] p-0 pl-1 font-bold">求和项:应收利息</td>';
  else {
    const [label, amount, interest] = data[n - 4];
    cells = `<td class="p-0 pb-px pl-[3px]">${label}</td><td class="p-0 pr-1 pb-px text-right">${amount}</td><td class="border-r border-[#dedede] p-0 pr-[3px] pb-px text-right">${interest}</td>`;
  }
  html += `<tr class="h-7">${rowHead(n)}${cells}${grid.repeat(9)}</tr>`;
}
document.getElementById('rows').innerHTML = html;

const fields = [['日期',false],['业务组',true],['成交额',true],['应收利息',true],['逾期金额',false]];
document.getElementById('fields').innerHTML = fields.map(([name, on]) =>
  `<li><label class="flex h-[33px] items-center gap-2"><span class="grid"><input type="checkbox" class="col-start-1 row-start-1 size-5 appearance-none border-2 border-[#8a8a8a] bg-white checked:border-[#107c41] checked:bg-[#107c41]"${on ? ' checked' : ''}>${on ? '<svg class="pointer-events-none col-start-1 row-start-1 size-5"><use href="#tick"/></svg>' : ''}</span><span class="${on ? 'font-bold' : 'font-normal'}">${name}</span></label></li>`).join('');
</script>
</body>
</html>
